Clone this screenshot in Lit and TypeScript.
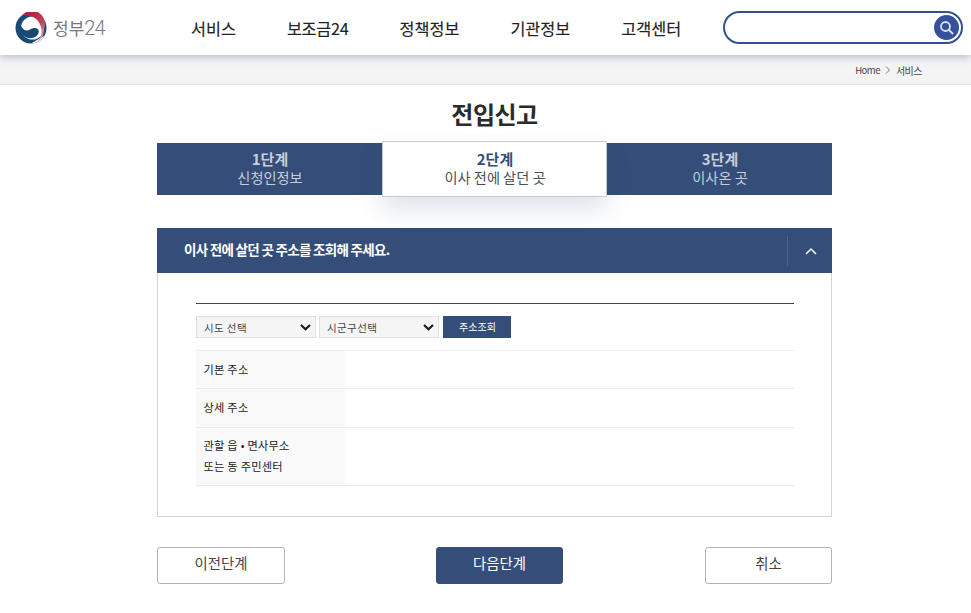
import { LitElement, html, css } from "lit";
import { customElement } from "lit/decorators.js";

@customElement("app-root")
export class AppRoot extends LitElement {
  static styles = css`
    :host { display: block; width: 971px; height: 613px; overflow: hidden; background: #fff; font-family: "Noto Sans CJK KR", "Noto Sans", sans-serif; color: #333; }
    * { box-sizing: border-box; }
    header { height: 55px; background: #fff; display: flex; align-items: center; position: relative; z-index: 2; box-shadow: 0 1px 9px rgba(60, 75, 125, .42); }
    .logo { width: 191px; padding-left: 15px; display: flex; align-items: center; gap: 6px; }
    .logo svg { display: block; }
    .logo span { font-size: 17px; color: #77787a; line-height: 30px; white-space: nowrap; }
    .logo em { font: 300 20px/30px Roboto, sans-serif; letter-spacing: -.9px; }
    nav { display: flex; gap: 51px; width: 532px; }
    nav a { font-size: 16.300px; color: #222; line-height: 22px; font-weight: 400; white-space: nowrap; -webkit-text-stroke: .15px #222; }
    nav a.num { letter-spacing: -.3px; }
    .search { width: 240px; height: 33px; border: 2px solid #34518f; border-radius: 17px; display: flex; align-items: center; justify-content: flex-end; padding-right: 2px; }
    .search i { width: 25px; height: 25px; border-radius: 50%; background: #34519b; display: flex; align-items: center; justify-content: center; }
    .crumb { height: 30px; background: #f5f4f5; border-bottom: 1px solid #e6e6e6; display: flex; justify-content: flex-end; align-items: center; gap: 5px; padding: 1px 49px 0 0; font-size: 10px; letter-spacing: -.5px; color: #444; }
    .crumb .home { font-size: 9.500px; }
    .crumb svg { display: block; }
    h1 { margin: 0; height: 58px; font-size: 24px; font-weight: 700; letter-spacing: -.5px; line-height: 58px; text-align: center; color: #2b2b2b; }
    main { width: 675px; margin-left: 157px; }
    .steps { display: flex; height: 52px; background: #344e79; }
    .step { width: 225px; display: flex; flex-direction: column; align-items: center; padding-top: 6px; padding-left: 1px; color: #c6cedb; font-size: 14.200px; line-height: 18px; }
    .step b { font-size: 15px; font-weight: 700; line-height: 19px; }
    .step.on { height: 56px; margin-top: -2px; padding-top: 7px; background: #fff; color: #4a4f59; border: 1px solid #c5cbd9; box-shadow: 0 12px 24px rgba(52, 78, 121, .16); position: relative; z-index: 1; }
    .step.on b { color: #344e79; }
    .phead { margin-top: 33px; height: 45px; background: #344e79; display: flex; align-items: center; justify-content: space-between; padding-left: 27px; color: #fff; font-size: 13.500px; font-weight: 700; letter-spacing: -.7px; }
    .phead span { padding-bottom: 4px; }
    .toggle { width: 45px; height: 30px; padding-left: 2px; border-left: 1px solid #4d6588; display: flex; align-items: center; justify-content: center; }
    .pbody { height: 244px; border: 1px solid #d4d4d4; border-top: 0; padding: 30px 37px 0 38px; }
    .inner { border-top: 1px solid #3c4656; }
    .row { display: flex; align-items: center; height: 22px; margin-top: 12px; gap: 3px; }
    .sel { position: relative; width: 120px; height: 22px; }
    .sel svg { position: absolute; right: 5px; top: 8px; pointer-events: none; }
    select { appearance: none; display: block; width: 120px; height: 22px; border: 1px solid #e0e0e0; background: #f5f5f5; font: 10.500px "Noto Sans CJK KR", sans-serif; letter-spacing: .4px; color: #444; padding-left: 7px; border-radius: 0; }
    .find { margin-left: 1px; width: 68px; height: 22px; background: #344e79; color: #fff; border: 0; padding: 0 0 2px 1px; font: 10px "Noto Sans CJK KR", sans-serif; }
    .table { margin-top: 12px; border-top: 1px solid #ececec; }
    .tr { display: flex; border-bottom: 1px solid #ececec; height: 38px; }
    .tr.mid { height: 39px; }
    .tr.tall { height: 58px; }
    .th { width: 149px; background: #f9f9f9; padding-left: 7.500px; font-size: 11.200px; line-height: 21px; color: #222; display: flex; flex-direction: column; justify-content: center; letter-spacing: .25px; }
    .tr.mid .th, .tr.tall .th { padding-bottom: 2px; }
    .btns { margin-top: 30px; display: flex; }
    .btn { width: 127px; height: 37px; border: 1px solid #b4b4b4; border-radius: 3px; background: #fff; color: #444; font: 14.400px/20px "Noto Sans CJK KR", sans-serif; padding: 0 0 6px; }
    .btn.prev { width: 128px; }
    .btn.primary { margin-left: 151px; margin-right: 142px; background: #344e79; border-color: #344e79; color: #fff; }
  `;

  render() {
    const chev = html`<svg width="11" height="7" viewBox="0 0 11 7" fill="none" stroke="#1a1a1a" stroke-width="2.200"><path d="M1 1l4.500 4.200L10 1"/></svg>`;
    return html`
      <header>
        <div class="logo">
          <svg width="32" height="32" viewBox="0 0 32 32">
            <defs>
              <linearGradient id="r" x1="0.300" y1="0" x2="0.700" y2="1">
                <stop offset="0" stop-color="#a8203c"/>
                <stop offset=".55" stop-color="#c9445c"/>
                <stop offset="1" stop-color="#efb6be"/>
              </linearGradient>
            </defs>
            <circle cx="16" cy="16" r="15.500" fill="#174a75"/>
            <circle cx="17.500" cy="16" r="11.500" fill="#fff"/>
            <path d="M29 24A15.500 15.500 0 0 1 21 30.700L16 31.500 29 24Z" fill="#fff"/>
            <path d="M6.500 4A15.500 15.500 0 0 1 21 30.700A14.500 14.500 0 0 0 28.800 17A13 13 0 0 0 6.500 4Z" fill="url(#r)"/>
            <path d="M6 14C8.500 18.500 12 19.500 15 17.500 18 15.500 21.500 15.500 23.200 17.500 24.500 19.500 23.500 22 22 23.500 18 27.500 10.500 27 7 22 5.200 19.500 5 16.500 6 14Z" fill="#174a75"/>
          </svg>
          <span>정부<em>24</em></span>
        </div>
        <nav><a>서비스</a><a class="num">보조금24</a><a>정책정보</a><a>기관정보</a><a>고객센터</a></nav>
        <div class="search"><i>
          <svg width="15" height="15" viewBox="0 0 15 15" fill="none" stroke="#d9e2f4" stroke-width="1.800" stroke-linecap="round"><circle cx="6.500" cy="6.500" r="4.500"/><path d="M10 10l3.500 3.500"/></svg>
        </i></div>
      </header>
      <div class="crumb">
        <span class="home">Home</span>
        <svg width="6" height="8" viewBox="0 0 6 8" fill="none" stroke="#777" stroke-width="1"><path d="M1 .5 4.500 4 1 7.500"/></svg>
        <span>서비스</span>
      </div>
      <main>
        <h1>전입신고</h1>
        <div class="steps">
          <div class="step"><b>1단계</b><span>신청인정보</span></div>
          <div class="step on"><b>2단계</b><span>이사 전에 살던 곳</span></div>
          <div class="step"><b>3단계</b><span>이사온 곳</span></div>
        </div>
        <div class="phead">
          <span>이사 전에 살던 곳 주소를 조회해 주세요.</span>
          <div class="toggle">
            <svg width="12" height="8" viewBox="0 0 12 8" fill="none" stroke="#fff" stroke-width="1.500"><path d="M1 7 6 2l5 5"/></svg>
          </div>
        </div>
        <div class="pbody">
          <div class="inner">
            <div class="row">
              <div class="sel"><select><option>시도 선택</option></select>${chev}</div>
              <div class="sel"><select><option>시군구선택</option></select>${chev}</div>
              <button class="find">주소조회</button>
            </div>
            <div class="table">
              <div class="tr"><div class="th">기본 주소</div></div>
              <div class="tr mid"><div class="th">상세 주소</div></div>
              <div class="tr tall"><div class="th"><span>관할 읍 • 면사무소</span><span>또는 동 주민센터</span></div></div>
            </div>
          </div>
        </div>
        <div class="btns">
          <button class="btn prev">이전단계</button>
          <button class="btn primary">다음단계</button>
          <button class="btn">취소</button>
        </div>
      </main>
    `;
  }
}
